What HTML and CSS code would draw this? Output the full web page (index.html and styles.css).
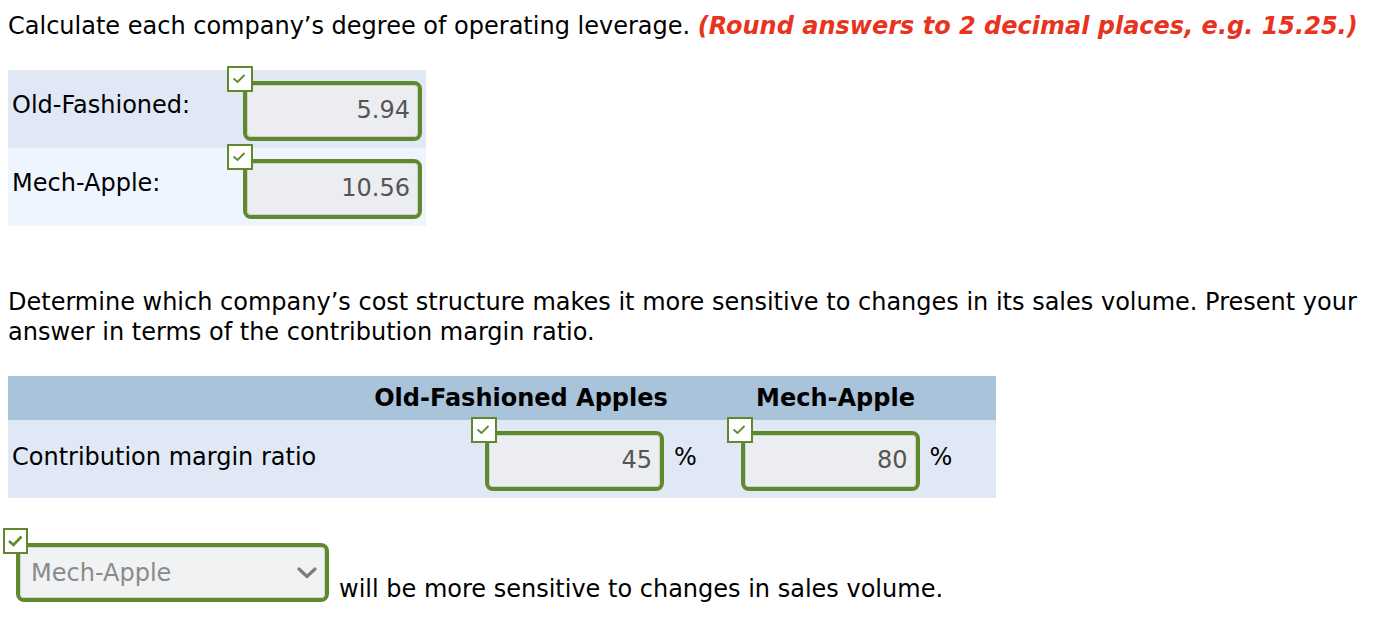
FILE: index.html
```html
<!DOCTYPE html>
<html>
<head>
<meta charset="utf-8">
<link rel="stylesheet" href="styles.css">
</head>
<body>
<p class="prompt">Calculate each company’s degree of operating leverage. <span class="hint">(Round answers to 2 decimal places, e.g. 15.25.)</span></p>

<div class="dol">
  <div class="dol-row odd">
    <div class="dol-label">Old-Fashioned:</div>
    <div class="field dol-field">
      <span class="check"><svg width="22" height="22" viewBox="0 0 22 22"><polyline points="4.5,10.5 8.5,14 15.5,7" fill="none" stroke="#5f8a2c" stroke-width="1.8"/></svg></span>
      <div class="box"><div class="box-inner">5.94</div></div>
    </div>
  </div>
  <div class="dol-row even">
    <div class="dol-label">Mech-Apple:</div>
    <div class="field dol-field">
      <span class="check"><svg width="22" height="22" viewBox="0 0 22 22"><polyline points="4.5,10.5 8.5,14 15.5,7" fill="none" stroke="#5f8a2c" stroke-width="1.8"/></svg></span>
      <div class="box"><div class="box-inner">10.56</div></div>
    </div>
  </div>
</div>

<p class="prompt2">Determine which company’s cost structure makes it more sensitive to changes in its sales volume. Present your<br>answer in terms of the contribution margin ratio.</p>

<div class="cm">
  <div class="cm-head">
    <div></div>
    <div>Old-Fashioned Apples</div>
    <div>Mech-Apple</div>
  </div>
  <div class="cm-row">
    <div class="cm-label">Contribution margin ratio</div>
    <div class="cm-cell">
      <div class="field cm-field">
        <span class="check"><svg width="22" height="22" viewBox="0 0 22 22"><polyline points="4.5,10.5 8.5,14 15.5,7" fill="none" stroke="#5f8a2c" stroke-width="1.8"/></svg></span>
        <div class="box"><div class="box-inner">45</div></div>
      </div>
      <span class="pct">%</span>
    </div>
    <div class="cm-cell">
      <div class="field cm-field">
        <span class="check"><svg width="22" height="22" viewBox="0 0 22 22"><polyline points="4.5,10.5 8.5,14 15.5,7" fill="none" stroke="#5f8a2c" stroke-width="1.8"/></svg></span>
        <div class="box"><div class="box-inner">80</div></div>
      </div>
      <span class="pct">%</span>
    </div>
  </div>
</div>

<div class="answer">
  <div class="field sel-field">
    <div class="select">
      <div class="select-inner">
        <span>Mech-Apple</span>
        <svg width="20" height="12" viewBox="0 0 20 12"><polyline points="2,2 10,9.5 18,2" fill="none" stroke="#7d7d7d" stroke-width="3.2" stroke-linecap="round" stroke-linejoin="round"/></svg>
      </div>
    </div>
    <span class="check sel-check"><svg width="20" height="20" viewBox="0 0 20 20"><polyline points="3,10 7.5,14 15.5,5.5" fill="none" stroke="#5f8a2c" stroke-width="2.6"/></svg></span>
  </div>
  <span class="answer-text">will be more sensitive to changes in sales volume.</span>
</div>
</body>
</html>
```

FILE: styles.css
```css
body {
  margin: 0;
  padding: 8px;
  font-family: "DejaVu Sans", Verdana, sans-serif;
  font-size: 24px;
  line-height: 30px;
  color: #000;
}

.prompt {
  margin: 3px 0 0;
  white-space: nowrap;
}

.hint {
  color: #e8331e;
  font-weight: bold;
  font-style: italic;
}

.dol {
  margin-top: 29px;
  width: 418px;
}

.dol-row {
  height: 78px;
  display: flex;
  align-items: flex-start;
}

.odd {
  background: #dfe8f4;
}

.even {
  background: #eef5fe;
}

.dol-label {
  width: 235px;
  box-sizing: border-box;
  padding: 20px 0 0 4px;
}

.dol-field {
  margin-top: 11px;
}

.field {
  position: relative;
}

.check {
  position: absolute;
  left: -16px;
  top: -15px;
  width: 26px;
  height: 26px;
  box-sizing: border-box;
  border: 2px solid #5f8a2c;
  background: #fff;
  display: flex;
  align-items: center;
  justify-content: center;
}

.box {
  width: 179px;
  height: 60px;
  box-sizing: border-box;
  border: 4px solid #5f8a2c;
  border-radius: 8px;
  background: #ebedf0;
}

.box-inner {
  height: 100%;
  box-sizing: border-box;
  border: 1px solid #cdd0d4;
  border-radius: 4px;
  text-align: right;
  padding-right: 7px;
  line-height: 48px;
  color: #555;
}

.prompt2 {
  margin: 61px 0 0;
  line-height: 30px;
  white-space: nowrap;
}

.cm {
  margin-top: 29px;
  width: 988px;
}

.cm-head {
  display: grid;
  grid-template-columns: 359px 308px 321px;
  height: 44px;
  align-items: center;
  text-align: center;
  font-weight: bold;
  background: #a9c3db;
}

.cm-row {
  display: flex;
  height: 78px;
  background: #dfe8f4;
}

.cm-label {
  width: 480px;
  box-sizing: border-box;
  padding: 22px 0 0 4px;
}

.cm-cell {
  width: 257px;
  display: flex;
  align-items: flex-start;
  padding-top: 11px;
}

.cm-field .check {
  left: -14px;
  top: -14px;
}

.pct {
  margin: 11px 0 0 10px;
}

.answer {
  margin-top: 45px;
  display: flex;
  align-items: flex-end;
}

.sel-field {
  margin-left: 8px;
}

.select {
  width: 313px;
  height: 59px;
  box-sizing: border-box;
  border: 4px solid #5f8a2c;
  border-radius: 8px;
  background: #f1f2f4;
}

.select-inner {
  height: 100%;
  box-sizing: border-box;
  border: 1px solid #d3d5d9;
  border-radius: 4px;
  display: flex;
  align-items: center;
  justify-content: space-between;
  padding: 0 7px 0 10px;
  color: #8a8a8a;
}

.sel-check {
  left: -13px;
  top: -15px;
  width: 25px;
  height: 26px;
}

.answer-text {
  margin-left: 10px;
  line-height: 26px;
}
```
